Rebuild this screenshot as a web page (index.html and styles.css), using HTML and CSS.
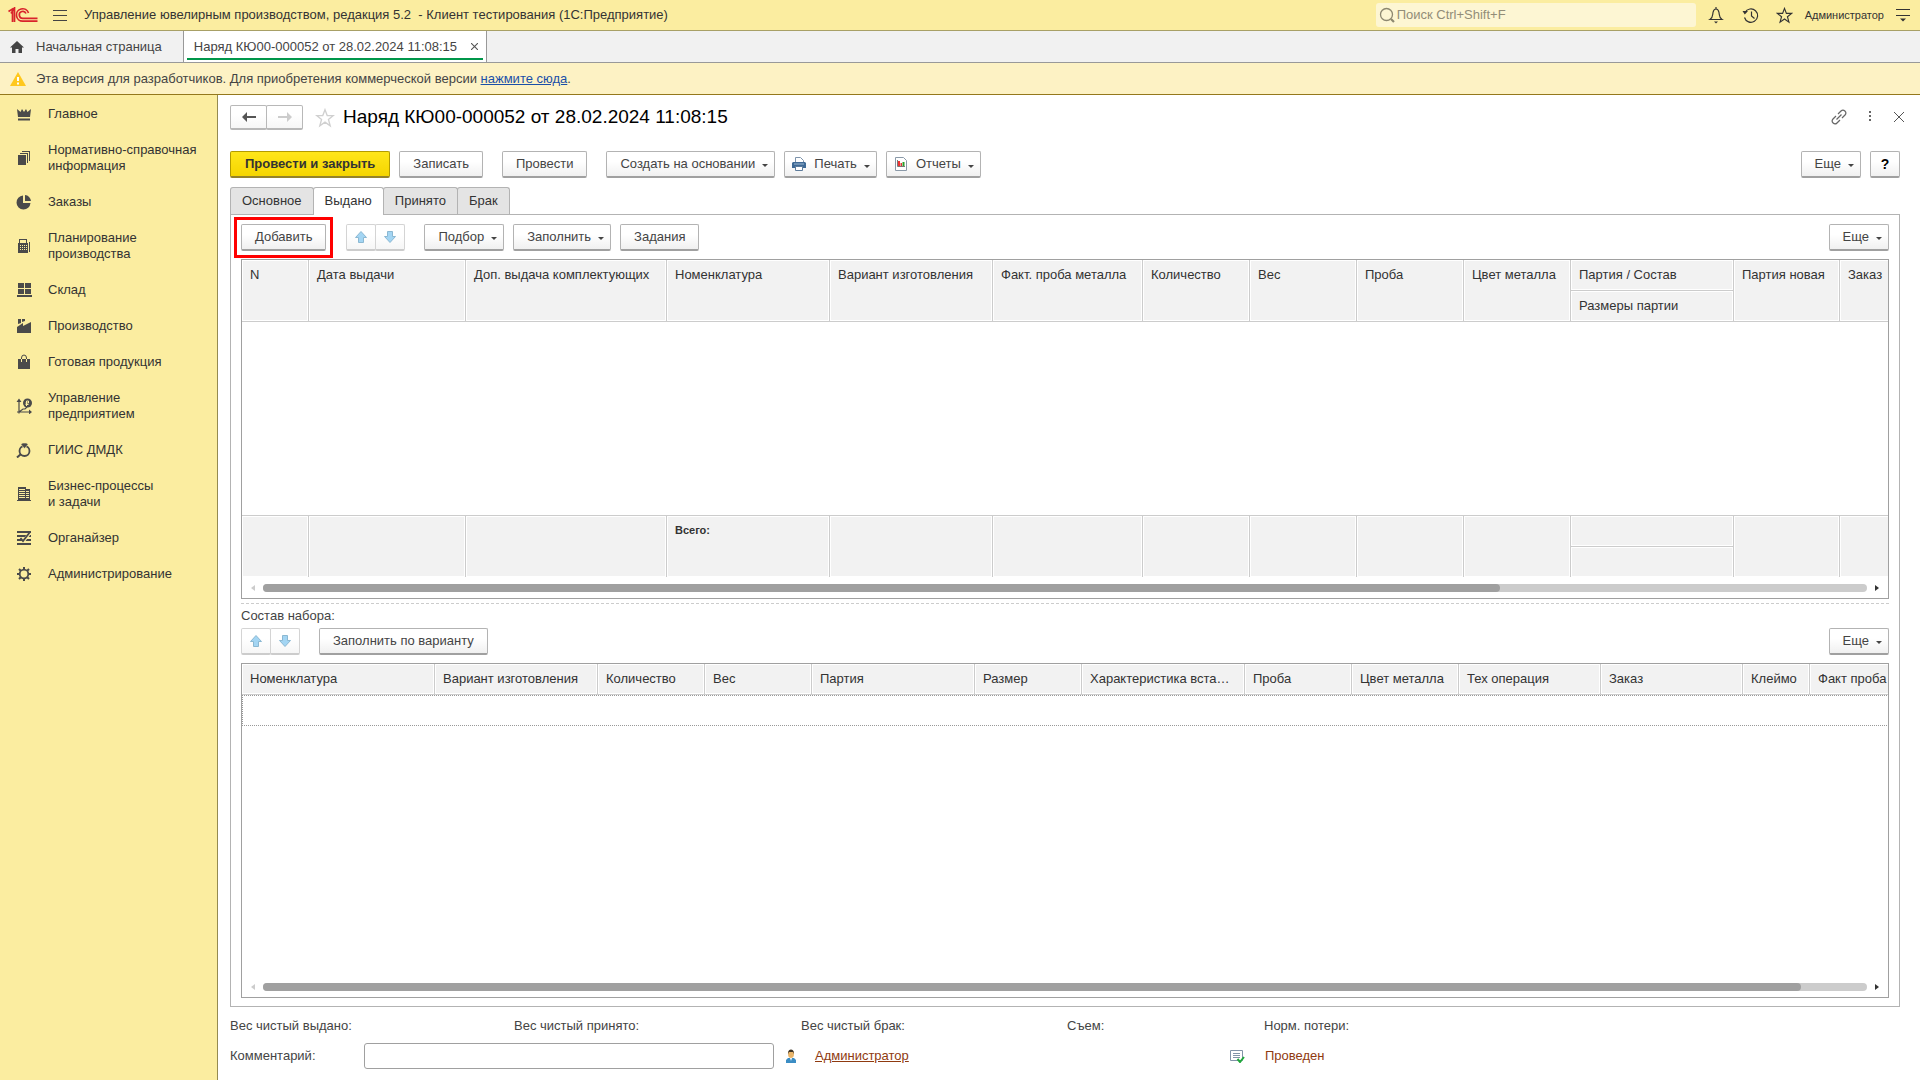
FILE: index.html
```html
<!DOCTYPE html>
<html lang="ru">
<head>
<meta charset="utf-8">
<title>Наряд КЮ00-000052 от 28.02.2024 11:08:15</title>
<link rel="stylesheet" href="styles.css">
</head>
<body>
<svg class="sprite" aria-hidden="true">
  <symbol id="i-up" viewBox="0 0 12 12"><path d="M6 .5 11.5 6.500H8.500v5h-5v-5H.5z" fill="#a3d5f3" stroke="#8bb8d2"/></symbol>
  <symbol id="i-down" viewBox="0 0 12 12"><path d="M6 11.500 11.500 5.500H8.500v-5h-5v5H.5z" fill="#a3d5f3" stroke="#8bb8d2"/></symbol>
  <symbol id="i-star" viewBox="0 0 18 18"><path d="M9 1.500l2 5.300h5.500l-4.400 3.500 1.600 5.700L9 12.700 4.300 16l1.600-5.700L1.500 6.800H7z" fill="none" stroke="currentColor" stroke-width="1.200"/></symbol>
</svg>

<header class="topbar">
  <svg class="logo" viewBox="0 0 30 16" fill="none" stroke="#d9232b" stroke-width="1.700"><path d="M.5 4.500 4.500 2v13M3 6.500 6.500 1v14"/><path d="M20.500 6A6.200 6.200 0 1 0 15 14.200h14.500"/><path d="M18 6.500A3.500 3.500 0 1 0 15 11.400h14.500"/></svg>
  <button class="icon-btn burger" aria-label="Меню"><svg width="14" height="12" stroke="#444"><path d="M0 1.500h14M0 6.500h14M0 11.500h14"/></svg></button>
  <div class="app-title">Управление ювелирным производством, редакция 5.2 &nbsp;- Клиент тестирования (1С:Предприятие)</div>
  <label class="search">
    <svg width="16" height="16" fill="none" stroke="#8d8870" stroke-width="1.300"><circle cx="7.500" cy="7.500" r="6"/><path d="m12 12 3 3" stroke-width="2.200"/></svg>
    <input type="text" placeholder="Поиск Ctrl+Shift+F" aria-label="Поиск">
  </label>
  <button class="icon-btn" aria-label="Уведомления"><svg width="17" height="18" fill="none" stroke="#333" stroke-width="1.200"><path d="M2 13.500c3-2 2.500-4 3-7C5.500 4 6.500 3 8 3s2.500 1 3 3.500c.5 3 0 5 3 7zM8 1v2"/><path d="M6 15.500h4L8 17.500z" fill="#333" stroke="none"/></svg></button>
  <button class="icon-btn" aria-label="История"><svg width="17" height="17" fill="none" stroke="#333" stroke-width="1.200"><path d="M3 5.500a6.700 6.700 0 1 1-.5 5M9.500 4.500v4.500l3 2.500"/><path d="M.5 4h5.500L2.800 7.500z" fill="#333" stroke="none"/></svg></button>
  <button class="icon-btn" aria-label="Избранное"><svg width="17" height="17" color="#333"><use href="#i-star"/></svg></button>
  <button class="user">Администратор</button>
  <button class="icon-btn" aria-label="Настройки"><svg width="14" height="14" stroke="#333"><path d="M0 1.500h14M0 7.500h14"/><path d="M4 10.500h6l-3 3z" fill="#333" stroke="none"/></svg></button>
</header>

<nav class="windows">
  <button class="win home"><svg width="14" height="12" fill="#444"><path d="M7 0l7 6.500h-2V12H8.500V8h-3v4H2V6.500H0z"/></svg>Начальная страница</button>
  <div class="win active"><span class="win-name">Наряд КЮ00-000052 от 28.02.2024 11:08:15</span><button class="icon-btn" aria-label="Закрыть вкладку"><svg width="7" height="7" stroke="#555" stroke-width="1.100"><path d="m0 0 7 7M7 0 0 7"/></svg></button></div>
</nav>

<div class="notice">
  <svg width="16" height="14"><path d="M8 0 16 14H0z" fill="#ffc81e"/><path d="M7 5h2v4H7zM7 10.500h2v2H7z" fill="#fff"/></svg>
  <span>Эта версия для разработчиков. Для приобретения коммерческой версии <a href="#">нажмите сюда</a>.</span>
</div>

<div class="workspace">
  <nav class="sidebar">
    <a href="#"><svg viewBox="0 0 16 16"><path d="M1 3l3.500 3L6 3l2 3 2-3 1.500 3L15 3l-1 8H2zM2 12.500h12v2H2z"/></svg><span>Главное</span></a>
    <a href="#"><svg viewBox="0 0 16 16"><path d="M2 5h8v10H2zM4 3h8v10h-1V4H4zM6 1h8v10h-1V2H6z"/></svg><span>Нормативно-справочная информация</span></a>
    <a href="#"><svg viewBox="0 0 16 16"><path d="M7 1.500V9h7.500A7 7 0 1 1 7 1.500z"/><path d="M9 1a6.500 6.500 0 0 1 6 6H9z"/></svg><span>Заказы</span></a>
    <a href="#"><svg viewBox="0 0 16 16"><path fill-rule="evenodd" d="M2 5h1V1h8v4h1v10H2zM4 2v3h6V2zM4 7v1h1V7zm2 0v1h1V7zm2 0v1h1V7zm2 0v1h1V7zM4 9v1h1V9zm2 0v1h1V9zm2 0v1h1V9zm2 0v1h1V9zM4 11v1h1v-1zm2 0v1h1v-1zm2 0v1h1v-1zm2 0v1h1v-1zM13 4h1v10h-1z"/></svg><span>Планирование производства</span></a>
    <a href="#"><svg viewBox="0 0 16 16"><path d="M2 1h6v5H2zM9 1h6v5H9zM2 7h6v5H2zM9 7h6v5H9zM1 13h15v2H1z"/></svg><span>Склад</span></a>
    <a href="#"><svg viewBox="0 0 16 16"><path d="M2 1h3v4L2 6zM6 1h3v2L6 4zM1 9l6-4v3l8-4v11H1z"/></svg><span>Производство</span></a>
    <a href="#"><svg viewBox="0 0 16 16"><path d="M2 5h12v10H2z"/><path d="M5.500 5V4a2.500 3 0 0 1 5 0v1" fill="none" stroke="#4a4a4a"/><path d="M5.500 5v3M10.500 5v3" stroke="#fbeda0"/></svg><span>Готовая продукция</span></a>
    <a href="#"><svg viewBox="0 0 16 16"><path d="M3 2v13.500M1 14h13M3 14l4-3 2 0 2-2" fill="none" stroke="#4a4a4a" stroke-width="1.200"/><path d="M.5 4 3 .5 5.500 4zM13 11.500l3 2.500-3 2.500z"/><circle cx="11.500" cy="5" r="4.500"/><path d="M10.500 8V3h2v2h-3M9.500 6.500h3" fill="none" stroke="#fbeda0"/></svg><span>Управление предприятием</span></a>
    <a href="#"><svg viewBox="0 0 16 16"><circle cx="8.500" cy="9" r="5" fill="none" stroke="#4a4a4a" stroke-width="1.800"/><path d="M1 15.500l4-3.500" stroke="#4a4a4a" stroke-width="2"/><path d="M5 2.500 6.500 1h4L12 2.500 8.500 6.500z" stroke="#fbeda0" stroke-width=".6"/></svg><span>ГИИС ДМДК</span></a>
    <a href="#"><svg viewBox="0 0 16 16"><path fill-rule="evenodd" d="M2 1h8v2h4v11h1v1H1v-1h1zM3 3v1h6V3zm0 2v1h6V5zm0 2v1h6V7zm0 2v1h6V9zm0 2v1h6v-1zM10 5v1h3V5zm0 2v1h3V7zm0 2v1h3V9zm0 2v1h3v-1z"/></svg><span>Бизнес-процессы и&nbsp;задачи</span></a>
    <a href="#"><svg viewBox="0 0 16 16"><path d="M1 1h14v2H1zM1 5h14v2H1zM1 9h14v2H1zM1 13h14v2H1z"/><path d="M6 8l2 2.500L13 4" fill="none" stroke="#fbeda0" stroke-width="3"/><path d="M4.500 8 7 11l7-9" fill="none" stroke="#4a4a4a" stroke-width="1.800"/></svg><span>Органайзер</span></a>
    <a href="#"><svg viewBox="0 0 16 16"><circle cx="8" cy="8" r="4.300" fill="none" stroke="#4a4a4a" stroke-width="1.800"/><path d="M8 1v3M8 12v3M1 8h3M12 8h3M3 3l2 2M11 11l2 2M13 3l-2 2M5 11l-2 2" stroke="#4a4a4a" stroke-width="2"/></svg><span>Администрирование</span></a>
  </nav>

  <main class="form">
    <div class="form-head">
      <div class="pair nav-pair">
        <button aria-label="Назад"><svg width="14" height="10" fill="#555"><path d="M0 5l5-5v4h9v2H5v4z"/></svg></button>
        <button aria-label="Вперед" disabled><svg width="14" height="10" fill="#ccc"><path d="M14 5 9 0v4H0v2h9v4z"/></svg></button>
      </div>
      <button class="icon-btn" aria-label="В избранное"><svg width="20" height="20" color="#d0d0d0"><use href="#i-star"/></svg></button>
      <h1>Наряд КЮ00-000052 от 28.02.2024 11:08:15</h1>
      <div class="head-tools">
        <button class="icon-btn" aria-label="Ссылка"><svg width="16" height="16" fill="none" stroke="#666" stroke-width="1.200"><path d="M7 5l3-3c2.500-2.500 6.500 1 4 4l-3 3M9 11l-3 3c-2.500 2.500-6.500-1-4-4l3-3M5.500 10.500l5-5"/></svg></button>
        <button class="icon-btn" aria-label="Действия"><svg width="3" height="11" fill="#666"><path d="M0 0h2v2H0zM0 4h2v2H0zM0 8h2v2H0z"/></svg></button>
        <button class="icon-btn" aria-label="Закрыть"><svg width="10" height="10" stroke="#555"><path d="m0 0 10 10M10 0 0 10"/></svg></button>
      </div>
    </div>

    <div class="commands">
      <button class="btn primary">Провести и закрыть</button>
      <button class="btn">Записать</button>
      <button class="btn gap-l">Провести</button>
      <button class="btn menu gap-l">Создать на основании</button>
      <button class="btn menu pic"><svg width="14" height="14"><path d="M3.500 6V.5h5l3 3V6" fill="#fff" stroke="#7d93ab"/><path d="M0 6l1-1h12l1 1v5H0z" fill="#3f6a96"/><path d="M2 7h10" stroke="#9fb9d3"/><path d="M3.500 9.500h7v4h-7z" fill="#fff" stroke="#5d7b9b"/></svg>Печать</button>
      <button class="btn menu pic"><svg width="14" height="14"><path d="M1.500.5h8l3 3v10h-11z" fill="#fff" stroke="#8a99a8"/><path d="M4 4h2v5H4z" fill="#e33"/><path d="M6.500 6h1.500v3H6.500z" fill="#d33"/><path d="M8.500 5h2v4h-2z" fill="#2a9d2a"/><path d="M3.500 3v6.500H11" fill="none" stroke="#777"/></svg>Отчеты</button>
      <span class="spacer"></span>
      <button class="btn menu">Еще</button>
      <button class="btn help" aria-label="Справка">?</button>
    </div>

    <div class="tabs" role="tablist">
      <button role="tab">Основное</button><button role="tab" class="current" aria-selected="true">Выдано</button><button role="tab">Принято</button><button role="tab">Брак</button>
    </div>

    <section class="panel">
      <div class="tools">
        <div class="marked"><button class="btn">Добавить</button></div>
        <div class="pair arrows">
          <button aria-label="Вверх" disabled><svg width="12" height="12"><use href="#i-up"/></svg></button>
          <button aria-label="Вниз" disabled><svg width="12" height="12"><use href="#i-down"/></svg></button>
        </div>
        <button class="btn menu gap-l">Подбор</button>
        <button class="btn menu">Заполнить</button>
        <button class="btn">Задания</button>
        <span class="spacer"></span>
        <button class="btn menu">Еще</button>
      </div>

      <div class="grid-box issued">
        <div class="grid-view">
          <table class="grid">
            <colgroup><col class="w67"><col class="w157"><col class="w201"><col class="w163"><col class="w163"><col class="w150"><col class="w107"><col class="w107"><col class="w107"><col class="w107"><col class="w163"><col class="w106"><col class="w107"></colgroup>
            <thead>
              <tr><th rowspan="2">N</th><th rowspan="2">Дата выдачи</th><th rowspan="2">Доп. выдача комплектующих</th><th rowspan="2">Номенклатура</th><th rowspan="2">Вариант изготовления</th><th rowspan="2">Факт. проба металла</th><th rowspan="2">Количество</th><th rowspan="2">Вес</th><th rowspan="2">Проба</th><th rowspan="2">Цвет металла</th><th>Партия / Состав</th><th rowspan="2">Партия новая</th><th rowspan="2">Заказ</th></tr>
              <tr><th>Размеры партии</th></tr>
            </thead>
            <tbody><tr><td class="empty" colspan="13"></td></tr></tbody>
            <tfoot>
              <tr><td rowspan="2"></td><td rowspan="2"></td><td rowspan="2"></td><td rowspan="2">Всего:</td><td rowspan="2"></td><td rowspan="2"></td><td rowspan="2"></td><td rowspan="2"></td><td rowspan="2"></td><td rowspan="2"></td><td class="split"></td><td rowspan="2"></td><td rowspan="2"></td></tr>
              <tr><td></td></tr>
            </tfoot>
          </table>
        </div>
        <div class="scroll"><i class="left"></i><div class="track"><div class="thumb" style="width:77.1%"></div></div><i class="right"></i></div>
      </div>

      <div class="splitter"></div>
      <div class="caption">Состав набора:</div>

      <div class="tools">
        <div class="pair arrows">
          <button aria-label="Вверх" disabled><svg width="12" height="12"><use href="#i-up"/></svg></button>
          <button aria-label="Вниз" disabled><svg width="12" height="12"><use href="#i-down"/></svg></button>
        </div>
        <button class="btn gap-l">Заполнить по варианту</button>
        <span class="spacer"></span>
        <button class="btn menu">Еще</button>
      </div>

      <div class="grid-box kit">
        <div class="grid-view">
          <table class="grid">
            <colgroup><col class="w193"><col class="w163"><col class="w107"><col class="w107"><col class="w163"><col class="w107"><col class="w163"><col class="w107"><col class="w107"><col class="w142"><col class="w142"><col class="w67"><col class="w157"></colgroup>
            <thead>
              <tr><th>Номенклатура</th><th>Вариант изготовления</th><th>Количество</th><th>Вес</th><th>Партия</th><th>Размер</th><th>Характеристика вста…</th><th>Проба</th><th>Цвет металла</th><th>Тех операция</th><th>Заказ</th><th>Клеймо</th><th>Факт проба</th></tr>
            </thead>
            <tbody>
              <tr><td class="cursor" colspan="13"></td></tr>
              <tr><td class="empty" colspan="13"></td></tr>
            </tbody>
          </table>
        </div>
        <div class="scroll"><i class="left"></i><div class="track"><div class="thumb" style="width:95.9%"></div></div><i class="right"></i></div>
      </div>
    </section>

    <div class="totals"><span>Вес чистый выдано:</span><span>Вес чистый принято:</span><span>Вес чистый брак:</span><span>Съем:</span><span>Норм. потери:</span></div>

    <div class="bottom">
      <label for="comment">Комментарий:</label>
      <input id="comment" type="text">
      <svg width="10" height="14"><path d="M0 14V11l2-2h6l2 2v3z" fill="#3b8dc4"/><path d="M4 9h2l-1 3z" fill="#fff"/><ellipse cx="5" cy="5" rx="3" ry="4" fill="#e9b56b"/><path d="M2 5c-.5-6 6.500-6 6 0L7 3H3z" fill="#3c3326"/></svg>
      <a class="author" href="#">Администратор</a>
      <svg width="16" height="14"><path d="M1.500 1.500h12v10h-12z" fill="#fff" stroke="#8294a8"/><path d="M4 4.500h7M4 6.500h7M4 8.500h7" stroke="#8294a8"/><path d="m8.500 10 2.500 3 4-5" fill="none" stroke="#1fa83a" stroke-width="2"/></svg>
      <span class="status">Проведен</span>
    </div>
  </main>
</div>
</body>
</html>
```
FILE: styles.css
```css
* { box-sizing: border-box; }

body {
  margin: 0;
  display: flex;
  flex-direction: column;
  height: 100vh;
  min-height: 720px;
  background: #fff;
  color: #444;
  font: 13px/16px "Liberation Sans", Arial, sans-serif;
}

button, input { font: inherit; color: inherit; }
button { padding: 0; border: 0; background: none; white-space: nowrap; }
svg { display: block; flex: none; }
.sprite { position: absolute; width: 0; height: 0; }
.icon-btn { display: flex; align-items: center; justify-content: center; flex: none; }
.spacer { flex: 1; }

/* Application title bar */
.topbar {
  display: flex;
  align-items: center;
  height: 31px;
  padding: 0 10px 0 8px;
  gap: 17px;
  background: #fbeda0;
  border-bottom: 1px solid #a8a066;
}
.logo { width: 30px; height: 16px; }
.burger { margin-left: -2px; }
.app-title { flex: 1; color: #333; white-space: nowrap; overflow: hidden; }
.search {
  display: flex;
  align-items: center;
  gap: 2px;
  width: 320px;
  height: 24px;
  padding: 0 3px;
  margin-bottom: 1px;
  margin-right: -5px;
  background: #fdf6d3;
  border-radius: 3px;
}
.search input { flex: 1; min-width: 0; padding: 0; border: 0; background: none; outline: 0; }
.search input::placeholder { color: #928d78; opacity: 1; }
.user { margin: 0 -5px; color: #333; font-size: 11px; }

/* Open windows */
.windows {
  display: flex;
  height: 32px;
  background: #f1f1f1;
  border-bottom: 1px solid #999;
}
.win { display: flex; align-items: center; border-right: 1px solid #999; color: #444; }
.home { gap: 12px; padding: 0 21px 0 10px; }
.active { gap: 14px; padding: 0 8px 0 10px; background: linear-gradient(#00964a, #00964a) center bottom 2px / calc(100% - 6px) 2px no-repeat #fff; }

/* Licence notice */
.notice {
  display: flex;
  align-items: center;
  gap: 10px;
  height: 32px;
  padding: 0 10px;
  background: #fdf2c4;
  border-bottom: 1px solid #94781c;
}
.notice a { color: #1a4fa8; }

.workspace { display: flex; flex: 1; min-height: 0; }

/* Sections */
.sidebar { width: 218px; flex: none; padding-top: 1px; background: #fbeda0; border-right: 1px solid #948a50; }
.sidebar a { display: flex; align-items: center; gap: 16px; padding: 10px 12px 10px 16px; color: #333; text-decoration: none; }
.sidebar svg { width: 16px; height: 16px; fill: #4a4a4a; }

/* Form */
.form { flex: 1; min-width: 0; display: flex; flex-direction: column; padding: 10px 20px 11px 12px; }
.form-head { display: flex; align-items: center; height: 25px; gap: 8px; }
.form-head .pair { margin-right: 4px; }
h1 { margin: 0; padding-bottom: 2px; color: #000; font-size: 19px; line-height: 24px; font-weight: 400; }
.head-tools { display: flex; align-items: center; gap: 22px; margin-left: auto; margin-right: -4px; padding-bottom: 2px; }

.btn {
  height: 27px;
  padding: 0 13px;
  border: 1px solid #b3b3b3;
  border-bottom: 2px solid #a0a0a0;
  border-radius: 2px;
  background: linear-gradient(#fff 40%, #f0f0f0);
  flex: none;
}
.btn.menu::after {
  content: "";
  display: inline-block;
  margin: 0 -7px 1px 7px;
  border: 3px solid transparent;
  border-top-color: #444;
  border-bottom: 0;
}
.pic { display: flex; align-items: center; gap: 8px; padding-left: 7px; }
.pic.menu::after { margin: 4px -7px 0 -1px; }
.primary { padding: 0 14px; background: linear-gradient(#ffe61a, #f5d500); border-color: #b39b00; border-bottom-color: #94822a; color: #333; font-weight: 700; }
.help { width: 30px; padding: 0; color: #000; font-size: 14px; font-weight: 700; }
.gap-l { margin-left: 10px; }

.commands, .tools { display: flex; align-items: center; gap: 9px; }
.commands { margin-top: 21px; }

.pair { display: flex; }
.pair button {
  display: flex;
  align-items: center;
  justify-content: center;
  width: 30px;
  height: 27px;
  border: 1px solid #d4d4d4;
  border-bottom: 2px solid #ccc;
  border-radius: 2px;
  background: linear-gradient(#fff 40%, #f6f6f6);
}
.pair button + button { margin-left: -1px; }
.nav-pair button { width: 37px; height: 25px; border-color: #b8b8b8; }

.tabs { display: flex; margin-top: 9px; }
.tabs button {
  height: 27px;
  padding: 0 11px;
  margin-right: -1px;
  border: 1px solid #b3b3b3;
  border-bottom: 0;
  border-radius: 3px 3px 0 0;
  background: #e4e4e4;
  color: #333;
}
.tabs .current { height: 28px; padding-bottom: 1px; margin-bottom: -1px; background: #fff; z-index: 1; }

.panel {
  flex: 1;
  min-height: 0;
  display: flex;
  flex-direction: column;
  padding: 9px 10px 8px;
  border: 1px solid #b3b3b3;
}
/* Highlight frame drawn around the button without taking space */
.marked { display: flex; outline: 3px solid #f00; outline-offset: 4px; margin-right: 11px; }

/* Data grids */
.grid-box { display: flex; flex-direction: column; margin-top: 8px; border: 1px solid #a0a0a0; min-height: 0; }
.issued { flex: 1 1 340px; }
.kit { flex: 1 1 336px; }
.grid-view { flex: 1; min-height: 0; overflow: hidden; display: grid; justify-items: start; }
.grid { width: max-content; height: 100%; table-layout: fixed; border-spacing: 0; }
.grid th, .grid td { padding: 0; text-align: left; vertical-align: top; }
.grid th, .grid tfoot td {
  height: 31px;
  padding: 7px 8px;
  border-right: 1px solid #ccc;
  background: #f2f2f2;
  box-shadow: inset 0 0 0 1px #fff;
  font-weight: 400;
  color: #333;
  white-space: nowrap;
  overflow: hidden;
  text-overflow: ellipsis;
}
.grid th { border-bottom: 1px solid #ccc; }
.grid tbody { height: 100%; }
.grid .empty { height: 100%; }
.issued .empty { border-bottom: 1px solid #ccc; }
.grid tfoot td { height: 30px; font-size: 11px; line-height: 14px; font-weight: 700; }
.grid tfoot .split { border-bottom: 1px solid #ccc; height: 31px; }
.grid .cursor { height: 31px; border: 1px dotted #999; }

.w67 { width: 67px; }
.w106 { width: 106px; }
.w107 { width: 107px; }
.w142 { width: 142px; }
.w150 { width: 150px; }
.w157 { width: 157px; }
.w163 { width: 163px; }
.w193 { width: 193px; }
.w201 { width: 201px; }

.scroll { display: flex; align-items: center; justify-content: space-between; gap: 8px; height: 21px; padding: 1px 9px 0; }
.track { flex: 1; height: 8px; border-radius: 4px; background: #ccc; }
.thumb { height: 8px; border-radius: 4px; background: #a0a0a0; }
.scroll i { border: 3px solid transparent; border-width: 3px 4px; }
.scroll .left { border-left-width: 0; border-right-color: #ccc; }
.scroll .right { border-right-width: 0; border-left-color: #333; }

.splitter { height: 1px; margin-top: 4px; background: repeating-linear-gradient(90deg, #ccc 0 3px, #fff 3px 5px); }
.caption { margin: 4px 0; }

/* Form footer */
.totals { display: grid; grid-template-columns: 284fr 287fr 266fr 197fr 636fr; margin-top: 11px; }
.bottom { display: flex; align-items: center; margin-top: 9px; }
.bottom label { width: 134px; }
.bottom input { width: 410px; height: 26px; padding: 0 6px; border: 1px solid #a0a0a0; border-radius: 3px; margin-right: 12px; }
.author { width: 414px; margin-left: 19px; color: #8f3a10; }
.status { margin-left: 20px; color: #8f3a10; }
```
